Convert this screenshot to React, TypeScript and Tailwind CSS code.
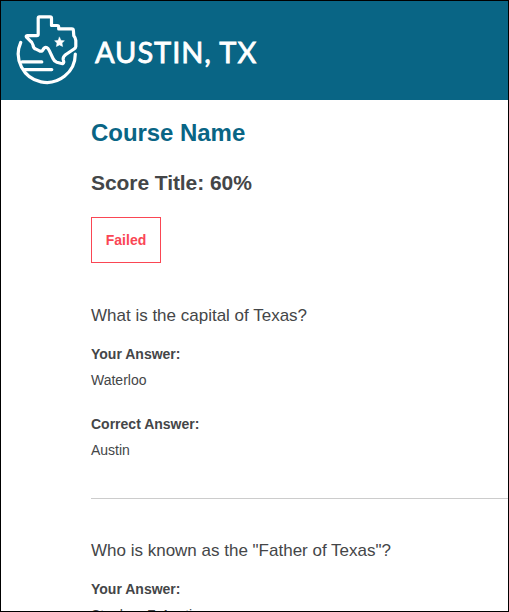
function TexasLogo() {
  return (
    <svg className="block shrink-0" width="62" height="70" viewBox="16 15 62 70" fill="none" stroke="white" strokeWidth="3.2" strokeLinecap="round" strokeLinejoin="round">
      <path d="M20.7 42.5A28.5 28.5 0 1 0 75.3 54" />
      <path d="M22 61.9H41.8M24.5 69.6H51.8" />
      <path d="M39.4 16.9H50.1Q51.5 16.9 51.5 18.2V25.5H57Q58.7 25.5 58.7 27V28.9H71.8Q73.3 28.9 73.4 30.5L73.8 35.8Q75.6 38 75.8 40.5V46.5Q75.6 48.2 74 49L65.5 54.8Q62.8 57 63.2 59.5L63.8 62Q63.5 63.9 61.5 63.5L56.8 62.2Q54.2 61.3 53 58.5L49.3 50.6Q47 46 44.2 48L42.4 50.7Q41.2 51.6 39.5 50.9L35.5 48.9Q33.3 48 33 45Q32.3 41.8 30 40.7L26.5 37.2Q25.6 35.8 27.2 35.7H36.8Q38.2 35.7 38.2 34.3V18.2Q38.2 16.9 39.4 16.9Z" />
      <path d="M59.5 37.2L61 40.4L64.4 40.8L62 43.1L62.6 46.5L59.5 44.9L56.4 46.5L57 43.1L54.6 40.8L58 40.4Z" fill="white" strokeWidth="0.5" />
    </svg>
  );
}

function Answer({ label, text }: { label: string; text: string }) {
  return (
    <div className="text-sm leading-[26px]">
      <div className="font-bold">{label}</div>
      <div>{text}</div>
    </div>
  );
}

export default function App() {
  return (
    <div className="h-[612px] w-[509px] overflow-hidden border border-black bg-white font-['Liberation_Sans',Arial,sans-serif] text-[#444648]">
      <header className="flex h-[99px] items-start bg-[#096585] pt-3.5 pl-[15px]">
        <TexasLogo />
        <div className="mt-3.5 ml-[17px] whitespace-nowrap font-['Lato',sans-serif] text-[29px] leading-[46px] tracking-[0.95px] text-white [-webkit-text-stroke:0.8px_white]">AUSTIN, TX</div>
      </header>
      <main className="pl-[90px]">
        <h1 className="pt-[17px] text-2xl leading-8 font-bold tracking-[-0.05px] text-[#096585]">Course Name</h1>
        <h2 className="mt-5 text-[21px] leading-7 font-bold tracking-[-0.07px]">Score Title: 60%</h2>
        <div className="mt-5 flex h-[46px] w-[70px] items-center justify-center border border-[#fa4654] text-sm font-bold text-[#fa4654]">Failed</div>
        <section className="h-[236px] border-b border-[#cccccc] pt-[41px]">
          <h3 className="text-[17px] leading-6">What is the capital of Texas?</h3>
          <div className="mt-[13px] flex flex-col gap-[18px]">
            <Answer label="Your Answer:" text="Waterloo" />
            <Answer label="Correct Answer:" text="Austin" />
          </div>
        </section>
        <section className="pt-10">
          <h3 className="text-[17px] leading-6">Who is known as the "Father of Texas"?</h3>
          <div className="mt-[13px]">
            <Answer label="Your Answer:" text="Stephen F. Austin" />
          </div>
        </section>
      </main>
    </div>
  );
}
